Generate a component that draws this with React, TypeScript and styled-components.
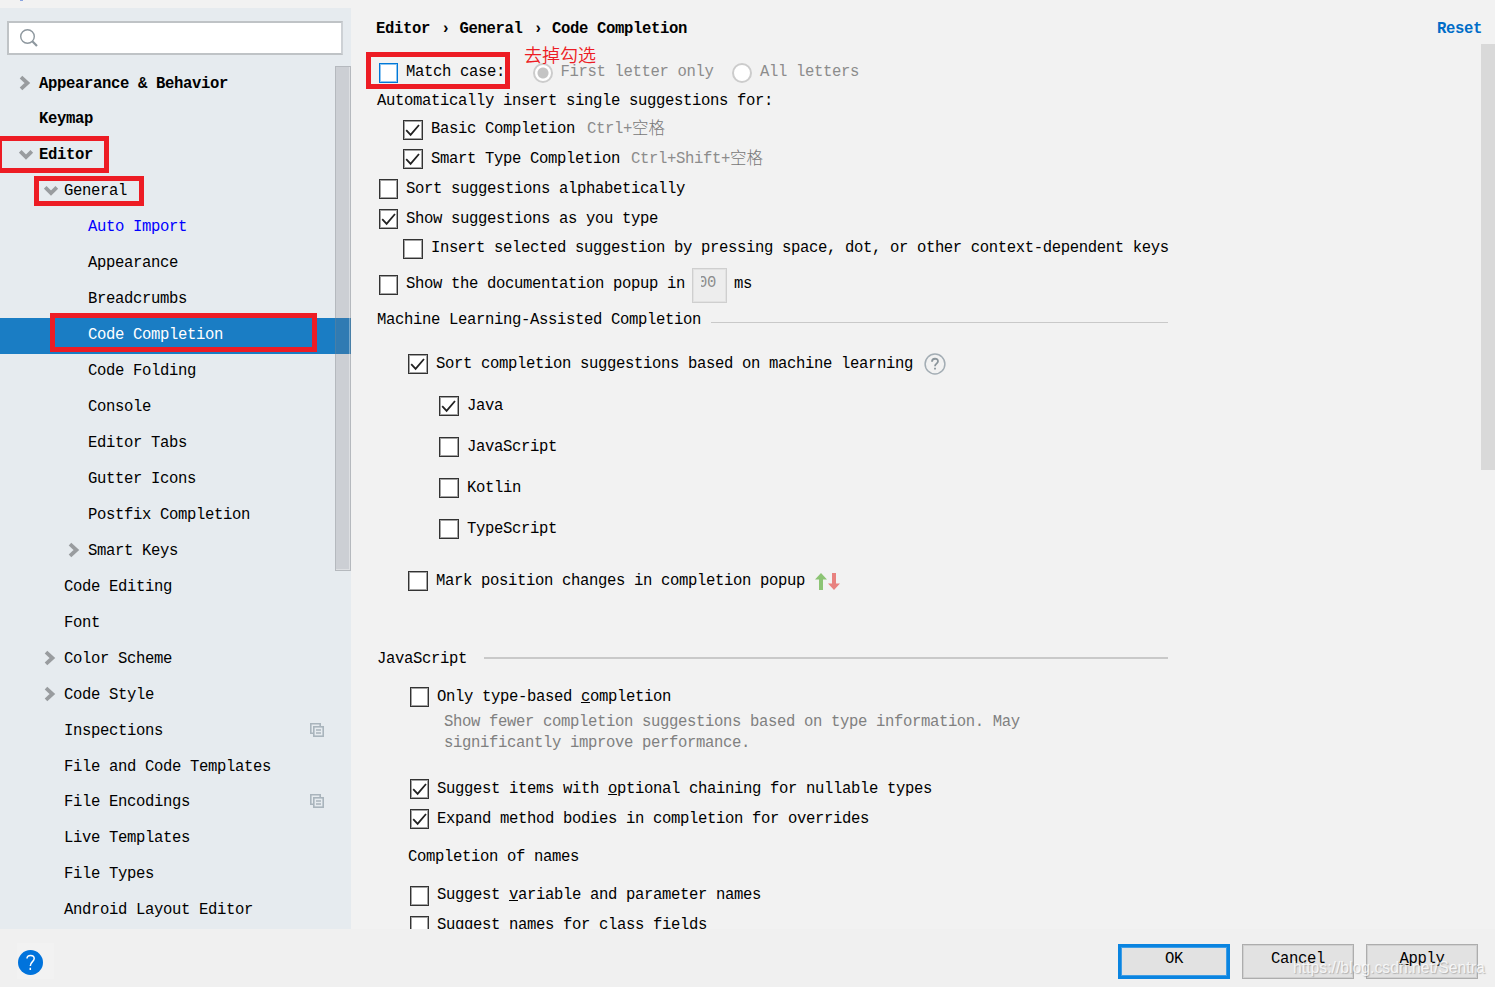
import styled, { createGlobalStyle } from "styled-components";
import { ReactNode } from "react";

const GlobalStyle = createGlobalStyle`
    * {
        box-sizing: border-box;
    }

    body {
        margin: 0;
        overflow: hidden;
        background: #f2f2f2;
        color: #000;
        font-family: "Liberation Mono", "Noto Sans CJK SC", monospace;
        font-size: 15.6px;
        letter-spacing: -0.36px;
    }
`;

const Dialog = styled.div`
    position: relative;
    width: 1495px;
    height: 987px;
    display: flex;
    flex-direction: column;
    overflow: hidden;
`;

const TitleStrip = styled.div`
    height: 8px;
    flex: none;
    padding-left: 20px;

    &::before {
        content: "";
        display: block;
        width: 3px;
        height: 1px;
        background: #8aa4e0;
    }
`;

const Body = styled.div`
    height: 921px;
    flex: none;
    display: flex;
    overflow: hidden;
`;

const Sidebar = styled.div`
    position: relative;
    width: 351px;
    flex: none;
    background: #e6ebef;
    padding-top: 13px;
`;

const SearchBox = styled.div`
    width: 336px;
    height: 34px;
    margin: 0 0 12px 7px;
    padding: 6px 0 0 11px;
    background: #fff;
    border: 2px solid #bfc3c6;
    border-right-color: #cdd1d5;
`;

const TreeRow = styled.div<{ $indent: number; $short?: boolean; $bold?: boolean; $color?: string; $selected?: boolean }>`
    display: flex;
    height: ${(p) => (p.$short ? 35 : 36)}px;
    padding-left: ${(p) => p.$indent - 24}px;
    line-height: 34px;
    white-space: pre;
    font-weight: ${(p) => (p.$bold ? 700 : 400)};
    color: ${(p) => (p.$selected ? "#fff" : p.$color || "#000")};
    background: ${(p) => (p.$selected ? "#1a7dc4" : "transparent")};
`;

const Arrow = styled.span`
    width: 24px;
    flex: none;
    padding: 7px 0 0 4px;
    line-height: 0;
`;

const RowIcon = styled.span`
    margin: 9px 27px 0 auto;
    line-height: 0;
`;

const SideScroll = styled.div`
    position: absolute;
    left: 335px;
    top: 58px;
    width: 16px;
    height: 505px;
    background: rgba(120, 115, 125, 0.23);
    border: 1px solid rgba(130, 135, 140, 0.3);
    box-shadow: inset -1px -1px 0 rgba(255, 255, 255, 0.35);
`;

const Main = styled.div`
    position: relative;
    flex: 1;
    padding: 10px 0 0 25px;
    overflow: hidden;
`;

const Row = styled.div<{ $h: number; $indent?: number; $color?: string }>`
    display: flex;
    height: ${(p) => p.$h}px;
    padding-left: ${(p) => p.$indent || 0}px;
    line-height: 22px;
    white-space: pre;
    color: ${(p) => p.$color || "#000"};
`;

const Crumb = styled.b`
    margin-right: 11px;
`;

const Separator = styled.b`
    margin-right: 9.5px;
`;

const Reset = styled.b`
    margin: 0 13px 0 auto;
    color: #006dc8;
`;

const CheckBox = styled.span<{ $dy: number; $w: number; $gap: number; $focus?: boolean }>`
    width: ${(p) => p.$w}px;
    height: 20px;
    flex: none;
    margin: ${(p) => p.$dy}px ${(p) => p.$gap}px 0 0;
    background: #fff;
    border: 1px solid ${(p) => (p.$focus ? "#0078d7" : "#333")};
    box-shadow: inset 0 0 0 1px ${(p) => (p.$focus ? "#8cc4f0" : "#a3a3a3")};
    line-height: 0;
`;

const Hint = styled.span<{ $gap?: number }>`
    display: flex;
    margin-left: ${(p) => p.$gap || 0}px;
    color: #8c8c8c;

    i {
        height: 20px;
        font: 300 16.5px/19px "Noto Sans CJK SC", sans-serif;
        letter-spacing: 0;
        color: #777;
    }
`;

const Radio = styled.span<{ $gap: number; $on?: boolean }>`
    width: 20px;
    height: 20px;
    flex: none;
    margin: 2px 7.5px 0 ${(p) => p.$gap}px;
    border: 2px solid #ccc;
    border-radius: 50%;
    background: ${(p) => (p.$on ? "radial-gradient(circle, #c4c4c4 5px, #fff 6px)" : "#fff")};
`;

const DelayField = styled.span`
    width: 35px;
    height: 35px;
    margin: -5px 7px 0 7px;
    padding: 3px 0 0 8px;
    border: 1px solid #cfcfcf;
    box-shadow: inset 0 0 0 1px #e2e2e2;
    background: #ededed;
    color: #8c8c8c;

    span {
        display: flex;
        justify-content: flex-end;
        width: 15px;
        overflow: hidden;
    }
`;

const Rule = styled.span<{ $gap: number; $thick?: number; $top: number }>`
    flex: 1;
    height: ${(p) => p.$thick || 1}px;
    margin: ${(p) => p.$top}px 327px 0 ${(p) => p.$gap}px;
    background: #c9c9c9;
`;

const Inline = styled.span<{ $left: number; $top: number }>`
    margin: ${(p) => p.$top}px 0 0 ${(p) => p.$left}px;
    line-height: 0;
`;

const MainScroll = styled.div`
    position: absolute;
    right: 0;
    top: 36px;
    width: 14px;
    height: 426px;
    background: #d9d9d9;
`;

const Footer = styled.div`
    height: 58px;
    flex: none;
    display: flex;
    gap: 12px;
    padding: 15px 17px 0 17px;
    background: #f0f0f0;
`;

const HelpButton = styled.span`
    width: 37px;
    height: 36px;
    margin: -1px auto 0 0;
    padding-top: 6px;
    background: #f2f2f2;
    line-height: 0;
`;

const Button = styled.button<{ $primary?: boolean }>`
    width: 112px;
    height: 35px;
    padding: 0 0 6px;
    font: inherit;
    letter-spacing: inherit;
    color: #000;
    background: #e2e2e2;
    border: ${(p) => (p.$primary ? "3px solid #0a84e0" : "1px solid #adadad")};
    box-shadow: inset 0 0 0 1px ${(p) => (p.$primary ? "#3d9de6" : "#d0d0d0")};
`;

/* hand-drawn callouts that sit above the dialog */
const Mark = styled.div<{ $x: number; $y: number; $w: number; $h: number }>`
    position: absolute;
    left: ${(p) => p.$x}px;
    top: ${(p) => p.$y}px;
    width: ${(p) => p.$w}px;
    height: ${(p) => p.$h}px;
    border: 5px solid #ed1c24;
`;

const Note = styled.div`
    position: absolute;
    left: 524px;
    top: 41px;
    font: 350 18px/26px "Noto Sans CJK SC", sans-serif;
    letter-spacing: 0;
    color: #ed1c24;
`;

const Watermark = styled.div`
    position: absolute;
    left: 1293px;
    top: 958px;
    font: 15.75px/20px "Liberation Sans", sans-serif;
    letter-spacing: 0;
    white-space: nowrap;
    color: rgba(255, 255, 255, 0.8);
    text-shadow: 1px 1px 1px rgba(130, 130, 130, 0.5);
`;

const Chevron = ({ open }: { open?: boolean }) => (
	<svg width="16" height="18" viewBox="0 0 16 18" fill="none" stroke="#999c9f" strokeWidth="3.8">
		{open ? <path d="M1.2 6.3 L7 12 L12.8 6.3" /> : <path d="M2 3.2 L8.4 9 L2 14.8" />}
	</svg>
);

const CopyIcon = () => (
	<svg width="14" height="14" viewBox="0 0 14 14" fill="none" stroke="#a9b4bc" strokeWidth="1.6">
		<path d="M3 10.2 H0.8 V0.8 H10.2 V3" />
		<rect x="3.8" y="3.8" width="9.4" height="9.4" />
		<path d="M6 7 H11 M6 10 H11" />
	</svg>
);

type OptionProps = {
	h: number;
	indent: number;
	dy?: number;
	w?: number;
	gap?: number;
	checked?: boolean;
	focus?: boolean;
	children: ReactNode;
};

const Option = ({ h, indent, dy = 1, w = 20, gap = 8, checked, focus, children }: OptionProps) => (
	<Row $h={h} $indent={indent}>
		<CheckBox $dy={dy} $w={w} $gap={gap} $focus={focus}>
			{checked && (
				<svg width="17" height="18" viewBox="0 0 17 18" fill="none" stroke="#222" strokeWidth="1.8">
					<path d="M2.2 9.2 L6.6 13.8 L15 4" />
				</svg>
			)}
		</CheckBox>
		{children}
	</Row>
);

const tree = [
	{ text: "Appearance & Behavior", indent: 39, arrow: "right", bold: true, short: true },
	{ text: "Keymap", indent: 39, bold: true },
	{ text: "Editor", indent: 39, arrow: "down", bold: true },
	{ text: "General", indent: 64, arrow: "down" },
	{ text: "Auto Import", indent: 88, color: "#0000ff" },
	{ text: "Appearance", indent: 88 },
	{ text: "Breadcrumbs", indent: 88 },
	{ text: "Code Completion", indent: 88, selected: true },
	{ text: "Code Folding", indent: 88 },
	{ text: "Console", indent: 88 },
	{ text: "Editor Tabs", indent: 88 },
	{ text: "Gutter Icons", indent: 88 },
	{ text: "Postfix Completion", indent: 88 },
	{ text: "Smart Keys", indent: 88, arrow: "right" },
	{ text: "Code Editing", indent: 64 },
	{ text: "Font", indent: 64 },
	{ text: "Color Scheme", indent: 64, arrow: "right" },
	{ text: "Code Style", indent: 64, arrow: "right" },
	{ text: "Inspections", indent: 64, icon: true },
	{ text: "File and Code Templates", indent: 64, short: true },
	{ text: "File Encodings", indent: 64, icon: true },
	{ text: "Live Templates", indent: 64 },
	{ text: "File Types", indent: 64 },
	{ text: "Android Layout Editor", indent: 64 },
];

export default function App() {
	return (
		<Dialog>
			<GlobalStyle />
			<TitleStrip />
			<Body>
				<Sidebar>
					<SearchBox>
						<svg width="20" height="20" viewBox="0 0 20 20" fill="none" stroke="#8d979e">
							<circle cx="7.5" cy="7.5" r="6.8" strokeWidth="1.4" />
							<path d="M12.3 12.3 L17 17" strokeWidth="2.2" />
						</svg>
					</SearchBox>
					{tree.map((item) => (
						<TreeRow key={item.text} $indent={item.indent} $short={item.short} $bold={item.bold} $color={item.color} $selected={item.selected}>
							<Arrow>{item.arrow && <Chevron open={item.arrow === "down"} />}</Arrow>
							{item.text}
							{item.icon && (
								<RowIcon>
									<CopyIcon />
								</RowIcon>
							)}
						</TreeRow>
					))}
					<SideScroll />
				</Sidebar>

				<Main>
					<Row $h={43}>
						<Crumb>Editor</Crumb>
						<Separator>›</Separator>
						<Crumb>General</Crumb>
						<Separator>›</Separator>
						<Crumb>Code Completion</Crumb>
						<Reset>Reset</Reset>
					</Row>
					<Option h={29} indent={3} dy={2} w={19} focus>
						Match case:
						<Hint>
							<Radio $gap={28} $on />
							First letter only
							<Radio $gap={19} />
							All letters
						</Hint>
					</Option>
					<Row $h={28} $indent={1}>
						Automatically insert single suggestions for:
					</Row>
					<Option h={30} indent={27} dy={2} checked>
						Basic Completion
						<Hint $gap={12}>
							Ctrl+<i>空格</i>
						</Hint>
					</Option>
					<Option h={30} indent={27} checked>
						Smart Type Completion
						<Hint $gap={11}>
							Ctrl+Shift+<i>空格</i>
						</Hint>
					</Option>
					<Option h={30} indent={3} w={19}>
						Sort suggestions alphabetically
					</Option>
					<Option h={29} indent={3} w={19} checked>
						Show suggestions as you type
					</Option>
					<Option h={36} indent={27} dy={2}>
						Insert selected suggestion by pressing space, dot, or other context-dependent keys
					</Option>
					<Option h={36} indent={3} dy={2} w={19}>
						Show the documentation popup in
						<DelayField>
							<span>00</span>
						</DelayField>
						ms
					</Option>
					<Row $h={44} $indent={1}>
						Machine Learning-Assisted Completion
						<Rule $gap={10} $top={13} />
					</Row>

					<Option h={42} indent={32} checked>
						Sort completion suggestions based on machine learning
						<Inline $left={11} $top={0}>
							<svg width="22" height="22" viewBox="0 0 22 22" fill="none" stroke="#a3adb4">
								<circle cx="11" cy="11" r="9.9" strokeWidth="1.5" />
								<path d="M8 8.8 C8 4.8 14 4.8 14 8.3 C14 10.6 11 10.6 11 13.2 M11 14.8 V16.6" stroke="#8b959b" strokeWidth="1.8" />
							</svg>
						</Inline>
					</Option>
					<Option h={41} indent={63} checked>
						Java
					</Option>
					<Option h={41} indent={63}>
						JavaScript
					</Option>
					<Option h={41} indent={63}>
						Kotlin
					</Option>
					<Option h={52} indent={63}>
						TypeScript
					</Option>
					<Option h={78} indent={32}>
						Mark position changes in completion popup
						<Inline $left={10} $top={3}>
							<svg width="26" height="18" viewBox="0 0 26 18">
								<path d="M6 0 L12 6.5 H8 V17 H4 V6.5 H0 Z" fill="#8cc474" />
								<path d="M17 0 H21 V10.5 H25 L19 17 L13 10.5 H17 Z" fill="#e8827f" />
							</svg>
						</Inline>
					</Option>

					<Row $h={38} $indent={1}>
						JavaScript
						<Rule $gap={17} $top={9} $thick={2} />
					</Row>
					<Option h={25} indent={34} w={19}>
						Only type-based <u>c</u>ompletion
					</Option>
					<Row $h={21} $indent={68} $color="#808080">
						Show fewer completion suggestions based on type information. May
					</Row>
					<Row $h={46} $indent={68} $color="#808080">
						significantly improve performance.
					</Row>
					<Option h={30} indent={34} w={19} checked>
						Suggest items with <u>o</u>ptional chaining for nullable types
					</Option>
					<Option h={38} indent={34} w={19} checked>
						Expand method bodies in completion for overrides
					</Option>
					<Row $h={38} $indent={32}>
						Completion of names
					</Row>
					<Option h={30} indent={34} dy={2} w={19}>
						Suggest <u>v</u>ariable and parameter names
					</Option>
					<Option h={30} indent={34} dy={2} w={19}>
						Suggest names for class fields
					</Option>
					<MainScroll />
				</Main>
			</Body>

			<Footer>
				<HelpButton>
					<svg width="26" height="27" viewBox="0 0 26 27" fill="none">
						<circle cx="13.5" cy="13.5" r="12.5" fill="#0073dc" />
						<path d="M10 9.6 C10 5.4 17.2 5.4 17.2 9.6 C17.2 12.6 13.3 12.8 13.3 17 M13.3 18.8 V21" stroke="#fff" strokeWidth="1.5" />
					</svg>
				</HelpButton>
				<Button $primary>OK</Button>
				<Button>Cancel</Button>
				<Button>
					<u>A</u>pply
				</Button>
			</Footer>

			<Mark $x={-3} $y={136} $w={112} $h={37} />
			<Mark $x={34} $y={176} $w={110} $h={30} />
			<Mark $x={50} $y={313} $w={267} $h={39} />
			<Mark $x={366} $y={52} $w={144} $h={37} />
			<Note>去掉勾选</Note>
			<Watermark>https://blog.csdn.net/Sentra</Watermark>
		</Dialog>
	);
}
